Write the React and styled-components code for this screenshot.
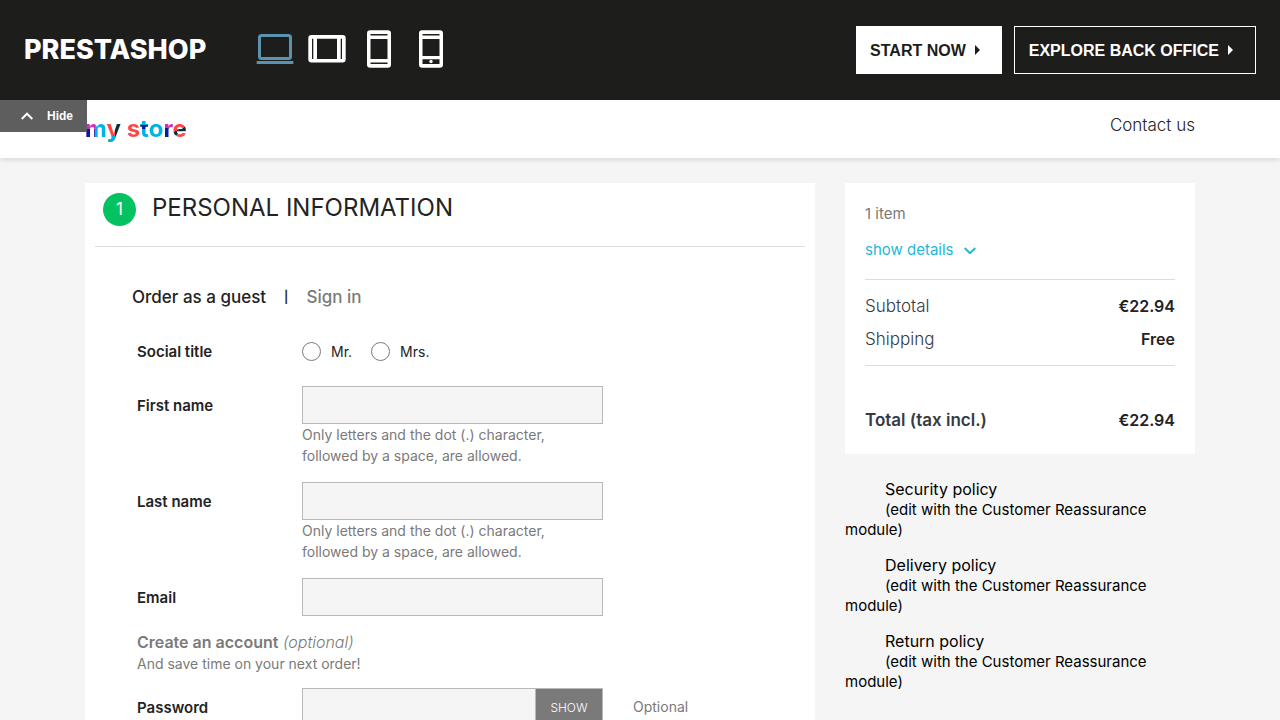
import React from "react";
import styled, { createGlobalStyle } from "styled-components";

const GlobalStyle = createGlobalStyle`
  *, *::before, *::after { box-sizing: border-box; }
  body {
    margin: 0;
    background: #f5f5f5;
    color: #232323;
    font-family: Inter, "Liberation Sans", sans-serif;
    font-size: 14px;
    line-height: 21px;
    -webkit-font-smoothing: antialiased;
  }
  h1, h2, p, ul { margin: 0; padding: 0; }
  button, input { font: inherit; }
  a { color: inherit; text-decoration: none; }
`;

const Shell = styled.div`
  position: relative;
  height: 100vh;
  overflow-x: hidden;
  overflow-y: auto;
  scrollbar-width: none;
`;

const DemoBar = styled.header`
  display: flex;
  align-items: center;
  min-height: 100px;
  padding: 0 24px;
  background: #1d1d1b;
  color: #fff;
`;

const Brand = styled.a`
  margin-right: 50px;
  font-size: 27px;
  font-weight: 800;
  line-height: 32px;
`;

const Devices = styled.nav`
  display: flex;
  gap: 12px;
`;

const DeviceButton = styled.button`
  display: flex;
  padding: 0;
  border: 0;
  background: none;
  color: ${(p) => (p.$active ? "#5b92b0" : "#fff")};
  cursor: pointer;
`;

const Actions = styled.div`
  display: flex;
  gap: 12px;
  margin-left: auto;
`;

const ActionLink = styled.a`
  display: flex;
  align-items: center;
  gap: 9px;
  height: 48px;
  padding: 0 ${(p) => (p.$solid ? 21 : 22)}px 0 ${(p) => (p.$solid ? 13 : 14)}px;
  border: 1px solid #fff;
  background: ${(p) => (p.$solid ? "#fff" : "transparent")};
  color: ${(p) => (p.$solid ? "#1d1d1b" : "#fff")};
  font-family: "Liberation Sans", Arial, sans-serif;
  font-size: 16px;
  font-weight: 700;
`;

const HideButton = styled.button`
  position: absolute;
  top: 100px;
  left: 0;
  z-index: 2;
  display: flex;
  align-items: center;
  gap: 14px;
  height: 32px;
  padding: 0 14px 0 21px;
  border: 0;
  background: #5e5e5e;
  color: #fff;
  font-family: "Liberation Sans", Arial, sans-serif;
  font-size: 12px;
  font-weight: 700;
`;

const StoreHeader = styled.header`
  position: relative;
  background: #fff;
  box-shadow: 0 2px 5px rgba(0, 0, 0, 0.11);
`;

const Container = styled.div`
  max-width: 1140px;
  margin: 0 auto;
  padding: 0 15px;
`;

const StoreBar = styled(Container)`
  display: flex;
  align-items: center;
  justify-content: space-between;
  min-height: 58px;
`;

const StoreLogo = styled.a`
  font-family: Inter, sans-serif;
  font-size: 24px;
  font-weight: 700;
  line-height: 32px;
`;

const LogoLetter = styled.span`
  background: ${(p) => p.$paint};
  background-clip: text;
  -webkit-background-clip: text;
  color: transparent;
`;

const ContactLink = styled.a`
  padding-bottom: 8px;
  font-size: 17px;
  font-weight: 300;
`;

const Columns = styled(Container)`
  display: grid;
  grid-template-columns: minmax(0, 73fr) minmax(0, 35fr);
  align-items: start;
  gap: 30px;
  padding-top: 25px;
`;

const StepCard = styled.main`
  padding: 10px 10px 40px;
  background: #fff;
`;

const StepHead = styled.div`
  display: flex;
  gap: 16px;
  padding: 0 8px 20px;
  border-bottom: 1px solid #dcdcdc;
`;

const StepNumber = styled.span`
  width: 33px;
  height: 33px;
  border-radius: 50%;
  background: #04c161;
  color: #fff;
  font-size: 17px;
  line-height: 33px;
  text-align: center;
`;

const StepTitle = styled.h1`
  font-size: 24px;
  font-weight: 400;
  line-height: 30px;
`;

const Tabs = styled.div`
  display: flex;
  gap: 18px;
  margin: 40px 37px 25px;
  font-size: 17px;
  line-height: 20px;
`;

const TabLink = styled.a`
  color: ${(p) => (p.$active ? "#232323" : "#7a7a7a")};
  font-weight: 500;
`;

const TabDivider = styled.span`
  font-size: 12px;
  font-weight: 600;
`;

const Form = styled.form`
  display: grid;
  gap: 16px;
  padding: 0 42px;
`;

const Row = styled.div`
  display: grid;
  grid-template-columns: 165px minmax(0, 301px) minmax(0, 1fr);
`;

const labelText = `
  font-size: 15px;
  font-weight: 600;
  line-height: 40px;
  height: 38px;
`;

const RowLabel = styled.label`${labelText}`;
const RowCaption = styled.span`${labelText}`;

const TextInput = styled.input`
  width: 100%;
  min-width: 0;
  height: 38px;
  padding: 0 12px;
  border: 1px solid #b8b8b8;
  border-radius: 0;
  background: #f5f5f5;
  outline: 0;
`;

const Hint = styled.p`
  color: #7a7a7a;
`;

const RadioGroup = styled.div`
  display: flex;
  align-items: center;
  gap: 19px;
`;

const RadioLabel = styled.label`
  display: flex;
  align-items: center;
  gap: 10px;
`;

const Radio = styled.input`
  appearance: none;
  width: 19px;
  height: 19px;
  margin: 0;
  border: 1px solid #7a7a7a;
  border-radius: 50%;
  background: #fff;
`;

const AccountNote = styled.p`
  margin-bottom: -2px;
  color: #7a7a7a;
`;

const NoteTitle = styled.span`
  display: block;
  font-size: 16px;
  font-weight: 300;
  strong { font-weight: 600; }
`;

const PasswordGroup = styled.div`
  display: flex;
`;

const ShowButton = styled.button`
  flex: 0 0 67px;
  border: 1px solid #b8b8b8;
  border-left: 0;
  background: #7a7a7a;
  color: #fff;
  font-size: 12px;
  font-weight: 300;
`;

const Comment = styled.span`
  padding-left: 30px;
  color: #7a7a7a;
  line-height: 38px;
`;

const Summary = styled.section`
  padding: 20px 20px 22px;
  background: #fff;
  font-size: 17px;
  line-height: 24px;
`;

const ItemCount = styled.p`
  color: #7a7a7a;
  font-size: 15px;
  line-height: 21px;
`;

const DetailsLink = styled.a`
  display: flex;
  align-items: center;
  gap: 10px;
  margin: 15px 0 19px;
  color: #24b9d7;
  font-size: 15px;
  line-height: 21px;
`;

const Lines = styled.div`
  display: grid;
  gap: 9px;
  padding: 14px 0;
  border: solid #dcdcdc;
  border-width: 1px 0;
`;

const Line = styled.div`
  display: flex;
  justify-content: space-between;
  color: #363a42;
  font-weight: ${(p) => (p.$total ? 600 : 300)};
  margin-top: ${(p) => (p.$total ? 42 : 0)}px;
`;

const Amount = styled.span`
  color: #232323;
  font-size: 16px;
  font-weight: 600;
`;

const Policies = styled.ul`
  display: grid;
  gap: 15px;
  margin-top: 25px;
  list-style: none;
`;

const Policy = styled.li`
  color: #000;
  font-size: 15px;
  line-height: 20px;
  text-indent: 40px;
`;

const PolicyTitle = styled.p`
  font-size: 16px;
  line-height: 21px;
`;

const letters = [
  ["m", "linear-gradient(180deg, transparent 0 52%, #011f9c 52%) 0 0 / 45% 100% no-repeat, linear-gradient(90deg, #d32fb6 0 45%, #00b3e6 45%)"],
  ["y", "linear-gradient(180deg, transparent 0 76%, #00b3e6 76%), linear-gradient(90deg, #ff4647 0 58%, #04323e 58%)"],
  [" ", "none"],
  ["s", "#ff4647"],
  ["t", "linear-gradient(180deg, #00b3e6 0 38%, #011f9c 38% 52%, #00b3e6 52%)"],
  ["o", "#00b3e6"],
  ["r", "linear-gradient(180deg, #d32fb6 0 48%, #011f9c 48%)"],
  ["e", "linear-gradient(155deg, #ff4647 0 52%, #04323e 52% 63%, #ff4647 63%)"],
];

const policies = ["Security policy", "Delivery policy", "Return policy"];

function LaptopIcon() {
  return (
    <svg width="40" height="40" viewBox="0 0 40 40" fill="none" stroke="currentColor" strokeWidth="3" aria-hidden="true">
      <rect x="3.5" y="5.5" width="31" height="23" rx="2" />
      <path d="M.7 32.5h36.6" />
    </svg>
  );
}

function TabletWideIcon() {
  return (
    <svg width="40" height="40" viewBox="0 0 40 40" fill="currentColor" fillRule="evenodd" aria-hidden="true">
      <path d="M3.5 5h31a3.2 3.2 0 0 1 3.2 3.2v21.1a3.2 3.2 0 0 1-3.2 3.2h-31A3.2 3.2 0 0 1 .3 29.3V8.200A3.200 3.200 0 0 1 3.500 5zM4 8.800v20.200h1.300V8.800zM9 8.800v20.200h20V8.800zM32.700 8.800v20.200H34V8.800z" />
    </svg>
  );
}

function TabletIcon() {
  return (
    <svg width="40" height="40" viewBox="0 0 40 40" fill="currentColor" fillRule="evenodd" aria-hidden="true">
      <path d="M10.200.3h17.600A3.200 3.200 0 0 1 31 3.500v31a3.200 3.200 0 0 1-3.200 3.200H10.200A3.200 3.200 0 0 1 7 34.500v-31A3.200 3.200 0 0 1 10.200.3zM10.500 4v1.500h17V4zM10.500 9v20h17V9zM10.500 32.500V34h17v-1.500z" />
    </svg>
  );
}

function PhoneIcon() {
  return (
    <svg width="40" height="40" viewBox="0 0 40 40" fill="currentColor" aria-hidden="true">
      <path fillRule="evenodd" d="M10.200.3h17.600A3.200 3.200 0 0 1 31 3.500v31a3.200 3.200 0 0 1-3.200 3.200H10.200A3.200 3.200 0 0 1 7 34.500v-31A3.200 3.200 0 0 1 10.200.3zM10.500 4v1.500h17V4zM10.500 9v17h17V9zM10.500 29.200V34h17v-4.800z" />
      <circle cx="19" cy="31.500" r="1.700" />
    </svg>
  );
}

function Caret() {
  return (
    <svg width="5" height="10" viewBox="0 0 5 10" aria-hidden="true">
      <path d="M0 0l5 5-5 5z" fill="currentColor" />
    </svg>
  );
}

function Chevron({ up }) {
  return (
    <svg width="12" height="8" viewBox="0 0 12 8" fill="none" stroke="currentColor" strokeWidth="2" aria-hidden="true">
      <path d={up ? "M.7 7L6 1.7 11.3 7" : "M.7 2L6 7.3 11.3 2"} />
    </svg>
  );
}

function Field({ id, label, hint, type = "text" }) {
  return (
    <Row>
      <RowLabel htmlFor={id}>{label}</RowLabel>
      <div>
        <TextInput id={id} type={type} />
        {hint && <Hint>Only letters and the dot (.) character,<br />followed by a space, are allowed.</Hint>}
      </div>
    </Row>
  );
}

export default function App() {
  return (
    <Shell>
      <GlobalStyle />
      <DemoBar>
        <Brand href="#">PRESTASHOP</Brand>
        <Devices aria-label="Preview size">
          <DeviceButton $active type="button" aria-label="Laptop"><LaptopIcon /></DeviceButton>
          <DeviceButton type="button" aria-label="Landscape tablet"><TabletWideIcon /></DeviceButton>
          <DeviceButton type="button" aria-label="Tablet"><TabletIcon /></DeviceButton>
          <DeviceButton type="button" aria-label="Phone"><PhoneIcon /></DeviceButton>
        </Devices>
        <Actions>
          <ActionLink $solid href="#">START NOW<Caret /></ActionLink>
          <ActionLink href="#">EXPLORE BACK OFFICE<Caret /></ActionLink>
        </Actions>
      </DemoBar>
      <HideButton type="button"><Chevron up />Hide</HideButton>

      <StoreHeader>
        <StoreBar>
          <StoreLogo href="#">
            {letters.map(([letter, paint], i) => (
              <LogoLetter key={i} $paint={paint}>{letter}</LogoLetter>
            ))}
          </StoreLogo>
          <ContactLink href="#">Contact us</ContactLink>
        </StoreBar>
      </StoreHeader>

      <Columns>
        <StepCard>
          <StepHead>
            <StepNumber>1</StepNumber>
            <StepTitle>PERSONAL INFORMATION</StepTitle>
          </StepHead>
          <Tabs>
            <TabLink $active href="#">Order as a guest</TabLink>
            <TabDivider>|</TabDivider>
            <TabLink href="#">Sign in</TabLink>
          </Tabs>
          <Form>
            <Row role="radiogroup" aria-labelledby="social-title">
              <RowCaption id="social-title">Social title</RowCaption>
              <RadioGroup>
                <RadioLabel><Radio type="radio" name="title" />Mr.</RadioLabel>
                <RadioLabel><Radio type="radio" name="title" />Mrs.</RadioLabel>
              </RadioGroup>
            </Row>
            <Field id="firstname" label="First name" hint />
            <Field id="lastname" label="Last name" hint />
            <Field id="email" label="Email" type="email" />
            <AccountNote>
              <NoteTitle><strong>Create an account</strong> <em>(optional)</em></NoteTitle>
              And save time on your next order!
            </AccountNote>
            <Row>
              <RowLabel htmlFor="password">Password</RowLabel>
              <PasswordGroup>
                <TextInput id="password" type="password" />
                <ShowButton type="button">SHOW</ShowButton>
              </PasswordGroup>
              <Comment>Optional</Comment>
            </Row>
          </Form>
        </StepCard>

        <aside>
          <Summary>
            <ItemCount>1 item</ItemCount>
            <DetailsLink href="#">show details<Chevron /></DetailsLink>
            <Lines>
              <Line>Subtotal<Amount>€22.94</Amount></Line>
              <Line>Shipping<Amount>Free</Amount></Line>
            </Lines>
            <Line $total>Total (tax incl.)<Amount>€22.94</Amount></Line>
          </Summary>
          <Policies>
            {policies.map((title) => (
              <Policy key={title}>
                <PolicyTitle>{title}</PolicyTitle>
                <p>(edit with the Customer Reassurance module)</p>
              </Policy>
            ))}
          </Policies>
        </aside>
      </Columns>
    </Shell>
  );
}
